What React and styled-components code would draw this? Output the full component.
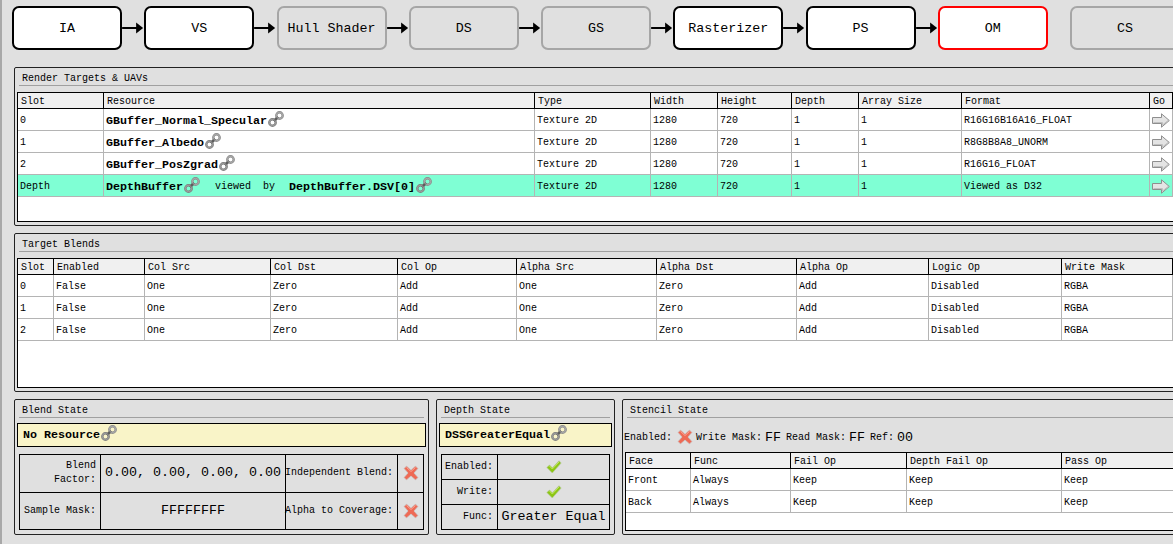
import React from 'react';
import styled, {createGlobalStyle} from 'styled-components';

const GlobalStyle = createGlobalStyle`
  html, body {
    margin: 0;
    padding: 0;
    background: #e0e0e0;
  }
`;

const Root = styled.div`
  width: 1173px;
  height: 544px;
  overflow: hidden;
  box-sizing: border-box;
  border-left: 2px solid #a8a8a8;
  background: #e0e0e0;
  color: #000;
  font-family: "Liberation Mono", "DejaVu Sans Mono", monospace;
  font-size: 10px;
`;

const Pipeline = styled.div`
  display: flex;
  align-items: center;
  padding: 6px 0 0 10px;
  width: 1300px;
  height: 44px;
`;

const Stage = styled.div`
  flex: 0 0 110px;
  box-sizing: border-box;
  height: 44px;
  display: flex;
  align-items: center;
  justify-content: center;
  border: 2px solid ${(props) => (props.$tone === 'red' ? '#f00' : props.$tone === 'off' ? '#a6a6a6' : '#000')};
  border-radius: 7px;
  background: ${(props) => (props.$tone === 'off' ? '#e0e0e0' : '#fff')};
  font-size: 13.33px;
  white-space: nowrap;
`;

const Connector = styled.div`
  flex: 0 0 22.25px;
  height: 12px;
`;

const Panels = styled.div`
  display: flex;
  flex-direction: column;
  gap: 7px;
  margin: 17px 0 0 12px;
  width: 1180px;
`;

const Group = styled.section`
  box-sizing: border-box;
  display: flex;
  flex-direction: column;
  flex: none;
  height: ${(props) => props.$height}px;
  width: ${(props) => (props.$width ? `${props.$width}px` : 'auto')};
  border: 1px solid #222;
  border-radius: 2px;
  padding: 0 2px 3px;
`;

const StretchGroup = styled(Group)`
  flex: 1;
`;

const GroupTitle = styled.div`
  box-sizing: border-box;
  height: 18px;
  margin: 0 2px 6px;
  padding: 5px 0 0 3px;
  line-height: 12px;
  border-bottom: 1px solid #a0a0a0;
  white-space: nowrap;
`;

const TableFrame = styled.div`
  flex: 1;
  background: #fff;
  border: 1px solid #000;
  overflow: hidden;
`;

const Row = styled.div`
  display: grid;
  grid-template-columns: ${(props) => props.$cols.map((c) => `${c}px`).join(' ')} 1fr;
  height: ${(props) => (props.$head ? 16 : 22)}px;
  box-sizing: border-box;
  background: ${(props) => (props.$head ? '#f0f0f0' : props.$active ? '#7fffd4' : '#fff')};
  border-bottom: 1px solid ${(props) => (props.$head ? '#000' : '#b4b4b4')};
`;

const Cell = styled.div`
  display: flex;
  align-items: center;
  box-sizing: border-box;
  padding: 2px 0 0 ${(props) => (props.$head ? 3 : 2)}px;
  border-right: 1px solid ${(props) => (props.$head ? '#000' : '#b4b4b4')};
  white-space: nowrap;
  overflow: hidden;
`;

const Filler = styled.div``;

const Bold = styled.b`
  font-size: 11.67px;
  font-weight: 700;
`;

const Viewed = styled.span`
  margin: 0 14px;
  white-space: pre;
`;

const ResourceBar = styled.div`
  box-sizing: border-box;
  display: flex;
  align-items: center;
  height: 24px;
  margin-top: -1px;
  padding-left: 5px;
  background: #f9f4c8;
  border: 1px solid #000;
`;

const StateGrid = styled.div`
  display: grid;
  grid-template-columns: ${(props) => props.$cols};
  grid-auto-rows: ${(props) => props.$row}px;
  margin: 7px 2px 0;
  border-top: 1px solid #000;
  border-left: 1px solid #000;
`;

const StateCell = styled.div`
  display: flex;
  align-items: center;
  justify-content: ${(props) => props.$align || 'center'};
  box-sizing: border-box;
  padding: ${(props) => (props.$align === 'flex-end' ? '0 4px 0 0' : '0')};
  border-right: 1px solid #000;
  border-bottom: 1px solid #000;
  font-size: ${(props) => (props.$large ? '13.33px' : '10px')};
  line-height: 14px;
  text-align: right;
  white-space: pre;
`;

const BottomRow = styled.div`
  display: flex;
  gap: 7px;
`;

const InfoLine = styled.div`
  display: flex;
  align-items: center;
  height: 22px;
  margin: 2px 0 4px -1px;
  white-space: nowrap;
`;

const InfoValue = styled.span`
  font-size: 13.33px;
  margin: 0 5px 0 3px;
`;

const IconSlot = styled.span`
  display: inline-flex;
  margin: 0 3px 0 5px;
`;

const LinkSvg = styled.svg`
  margin-top: -4px;
  flex: none;
`;

function Arrow() {
  return (
    <svg width="22.25" height="12" viewBox="0 0 22 12">
      <path d="M0 5h15v2H0z" fill="#000" />
      <path d="M14 0.5 L21 6 L14 11.5z" fill="#000" />
    </svg>
  );
}

function LinkIcon() {
  return (
    <LinkSvg width="18" height="18" viewBox="0 0 18 18">
      <g fill="none">
        <circle cx="5.5" cy="12.5" r="3.2" stroke="#7c7c7c" strokeWidth="2.4" />
        <circle cx="12.5" cy="5.5" r="3.2" stroke="#8a8a8a" strokeWidth="2.4" />
        <path d="M7 11 L11 7" stroke="#5e5e5e" strokeWidth="2.6" />
        <circle cx="12.5" cy="5.5" r="3.2" stroke="#bdbdbd" strokeWidth="0.7" />
        <circle cx="5.5" cy="12.5" r="3.2" stroke="#b0b0b0" strokeWidth="0.7" />
      </g>
    </LinkSvg>
  );
}

function GoIcon() {
  return (
    <svg width="18" height="15" viewBox="0 0 18 15">
      <path d="M0.5 4.5H9.5V0.8L17.3 7.5L9.5 14.2V10.5H0.5z" fill="#e4e4e4" stroke="#8e8e8e" />
      <path d="M1.5 9.5H10.5V12L16 7.5" fill="none" stroke="#c0c0c0" />
    </svg>
  );
}

function CrossIcon() {
  return (
    <svg width="16" height="16" viewBox="0 0 16 16">
      <path
        d="M1 3.5L3.5 1L8 5L12.5 1L15 3.5L11 8L15 12.5L12.5 15L8 11L3.5 15L1 12.5L5 8z"
        fill="#ee6a55"
        stroke="#c9c9c9"
        strokeWidth="0.8"
      />
      <path d="M3.5 2.5L8 6.5L12.5 2.5" fill="none" stroke="#f8a393" strokeWidth="1" />
    </svg>
  );
}

function CheckIcon() {
  return (
    <svg width="16" height="14" viewBox="0 0 16 14">
      <path
        d="M0.8 7.5L3.5 5L6.3 7.8L13 0.8L15.2 3L6.3 13z"
        fill="#8cc614"
        stroke="#b9c9a0"
        strokeWidth="0.7"
      />
      <path d="M3.5 6L6.3 9L13 2" fill="none" stroke="#c4e860" strokeWidth="1" />
    </svg>
  );
}

function DataTable({cols, head, children}) {
  return (
    <>
      <Row $head $cols={cols}>
        {head.map((label) => (
          <Cell $head key={label}>{label}</Cell>
        ))}
        <Filler />
      </Row>
      {children}
    </>
  );
}

function DataRow({cols, values, active}) {
  return (
    <Row $cols={cols} $active={active}>
      {values.map((value, i) => (
        <Cell key={i}>{value}</Cell>
      ))}
      <Filler />
    </Row>
  );
}

const targetCols = [86, 431, 116, 67, 74, 67, 103, 188, 23];
const targetHead = ['Slot', 'Resource', 'Type', 'Width', 'Height', 'Depth', 'Array Size', 'Format', 'Go'];

const named = (name) => (
  <>
    <Bold>{name}</Bold>
    <LinkIcon />
  </>
);

const targets = [
  ['0', named('GBuffer_Normal_Specular'), 'R16G16B16A16_FLOAT'],
  ['1', named('GBuffer_Albedo'), 'R8G8B8A8_UNORM'],
  ['2', named('GBuffer_PosZgrad'), 'R16G16_FLOAT'],
];

const blendCols = [36, 91, 126, 127, 119, 140, 140, 132, 133, 111];
const blendHead = ['Slot', 'Enabled', 'Col Src', 'Col Dst', 'Col Op', 'Alpha Src', 'Alpha Dst', 'Alpha Op', 'Logic Op', 'Write Mask'];

const stencilCols = [65, 100, 116, 155, 112];
const stencilHead = ['Face', 'Func', 'Fail Op', 'Depth Fail Op', 'Pass Op'];

const stages = [
  ['IA', 'on'],
  ['VS', 'on'],
  ['Hull Shader', 'off'],
  ['DS', 'off'],
  ['GS', 'off'],
  ['Rasterizer', 'on'],
  ['PS', 'on'],
  ['OM', 'red'],
];

export default function App() {
  return (
    <Root>
      <GlobalStyle />
      <Pipeline>
        {stages.map(([label, tone], i) => (
          <React.Fragment key={label}>
            <Stage $tone={tone}>{label}</Stage>
            <Connector>{i < stages.length - 1 && <Arrow />}</Connector>
          </React.Fragment>
        ))}
        <Stage $tone="off">CS</Stage>
      </Pipeline>
      <Panels>
        <Group $height={159}>
          <GroupTitle>Render Targets &amp; UAVs</GroupTitle>
          <TableFrame>
            <DataTable cols={targetCols} head={targetHead}>
              {targets.map(([slot, resource, format]) => (
                <DataRow
                  key={slot}
                  cols={targetCols}
                  values={[slot, resource, 'Texture 2D', '1280', '720', '1', '1', format, <GoIcon />]}
                />
              ))}
              <DataRow
                active
                cols={targetCols}
                values={[
                  'Depth',
                  <>
                    {named('DepthBuffer')}
                    <Viewed>viewed  by</Viewed>
                    {named('DepthBuffer.DSV[0]')}
                  </>,
                  'Texture 2D',
                  '1280',
                  '720',
                  '1',
                  '1',
                  'Viewed as D32',
                  <GoIcon />,
                ]}
              />
            </DataTable>
          </TableFrame>
        </Group>
        <Group $height={159}>
          <GroupTitle>Target Blends</GroupTitle>
          <TableFrame>
            <DataTable cols={blendCols} head={blendHead}>
              {['0', '1', '2'].map((slot) => (
                <DataRow
                  key={slot}
                  cols={blendCols}
                  values={[slot, 'False', 'One', 'Zero', 'Add', 'One', 'Zero', 'Add', 'Disabled', 'RGBA']}
                />
              ))}
            </DataTable>
          </TableFrame>
        </Group>
        <BottomRow>
          <Group $height={136} $width={415}>
            <GroupTitle>Blend State</GroupTitle>
            <ResourceBar>{named('No Resource')}</ResourceBar>
            <StateGrid $cols="81px 185px 112px 26px" $row={37.5}>
              <StateCell $align="flex-end">{'Blend\nFactor:'}</StateCell>
              <StateCell $large>0.00, 0.00, 0.00, 0.00</StateCell>
              <StateCell $align="flex-end">Independent Blend:</StateCell>
              <StateCell><CrossIcon /></StateCell>
              <StateCell $align="flex-end">Sample Mask:</StateCell>
              <StateCell $large>FFFFFFFF</StateCell>
              <StateCell $align="flex-end">Alpha to Coverage:</StateCell>
              <StateCell><CrossIcon /></StateCell>
            </StateGrid>
          </Group>
          <Group $height={136} $width={179}>
            <GroupTitle>Depth State</GroupTitle>
            <ResourceBar>{named('DSSGreaterEqual')}</ResourceBar>
            <StateGrid $cols="56px 112px" $row={25}>
              <StateCell $align="flex-end">Enabled:</StateCell>
              <StateCell><CheckIcon /></StateCell>
              <StateCell $align="flex-end">Write:</StateCell>
              <StateCell><CheckIcon /></StateCell>
              <StateCell $align="flex-end">Func:</StateCell>
              <StateCell $large>Greater Equal</StateCell>
            </StateGrid>
          </Group>
          <StretchGroup $height={136}>
            <GroupTitle>Stencil State</GroupTitle>
            <InfoLine>
              Enabled:
              <IconSlot><CrossIcon /></IconSlot>
              Write Mask:<InfoValue>FF</InfoValue>
              Read Mask:<InfoValue>FF</InfoValue>
              Ref:<InfoValue>00</InfoValue>
            </InfoLine>
            <TableFrame>
              <DataTable cols={stencilCols} head={stencilHead}>
                {['Front', 'Back'].map((face) => (
                  <DataRow
                    key={face}
                    cols={stencilCols}
                    values={[face, 'Always', 'Keep', 'Keep', 'Keep']}
                  />
                ))}
              </DataTable>
            </TableFrame>
          </StretchGroup>
        </BottomRow>
      </Panels>
    </Root>
  );
}
